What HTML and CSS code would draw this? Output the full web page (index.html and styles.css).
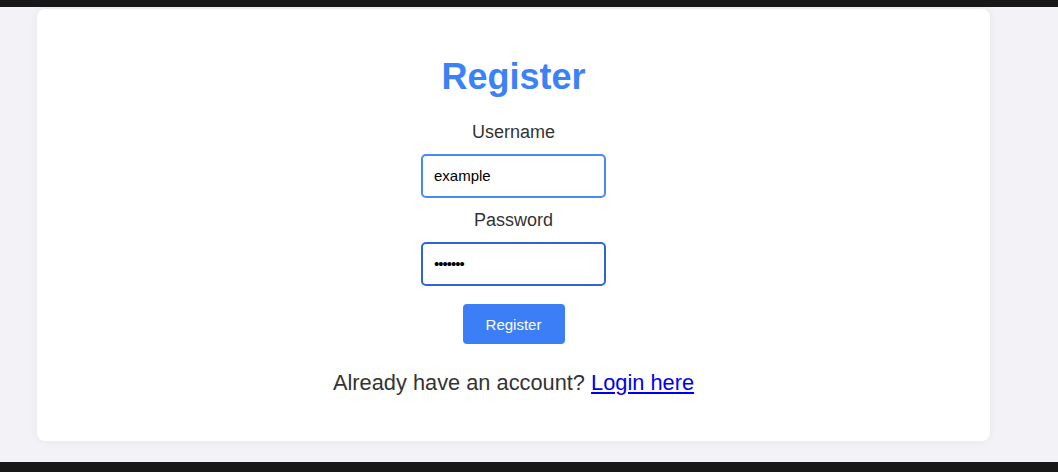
FILE: index.html
```html
<!DOCTYPE html>
<html lang="en">
<head>
  <meta charset="UTF-8" />
  <meta name="viewport" content="width=device-width, initial-scale=1.0"/>
  <title>Register</title>
  <link rel="stylesheet" href="styles.css">
</head>
<body>

  <!-- top strip -->
  <div class="topbar"></div>

  <div class="page">
    <div class="card">
      <h2>Register</h2>
      <form class="register-form" onsubmit="return false;">
        <label for="username">Username</label>
        <input type="text" id="username" value="example">
        <label for="password">Password</label>
        <input type="password" id="password" class="focused" value="1234567">
        <button type="submit">Register</button>
      </form>
      <p class="switch">Already have an account? <a href="#">Login here</a></p>
    </div>
  </div>

  <div class="bottombar"></div>

</body>
</html>
```

FILE: styles.css
```css
* {
  box-sizing: border-box;
}

body {
  margin: 0;
  background-color: #f2f2f7;
  font-family: "Liberation Sans", Arial, sans-serif;
  color: #333;
}

.topbar {
  height: 7px;
  background-color: #181818;
}

.bottombar {
  height: 10px;
  background-color: #181818;
}

.page {
  padding: 2px 68px 21px 37px;
}

.card {
  background: #fff;
  border-radius: 8px;
  box-shadow: 0 0 10px rgba(0, 0, 0, 0.06);
  padding: 47px 20px 46px;
  text-align: center;
  height: 432px;
}

.card h2 {
  margin: 0 0 24px;
  font-size: 36px;
  font-weight: 700;
  color: #3b82f6;
}

.register-form {
  display: flex;
  flex-direction: column;
  align-items: center;
}

.register-form label {
  font-size: 18px;
  margin-bottom: 11px;
}

.register-form input {
  width: 185px;
  height: 44px;
  padding: 0 11px 2px;
  margin-bottom: 12px;
  border: 2px solid #4a88f2;
  border-radius: 5px;
  font-family: "Liberation Sans", Arial, sans-serif;
  font-size: 15px;
  color: #000;
  outline: none;
}

.register-form input.focused {
  border-color: #2f66d2;
  margin-bottom: 18px;
  letter-spacing: -1px;
}

.register-form button {
  width: 102px;
  height: 40px;
  background-color: #3b7ef6;
  color: #fff;
  border: none;
  border-radius: 4px;
  font-family: "Liberation Sans", Arial, sans-serif;
  font-size: 15px;
  cursor: pointer;
}

.switch {
  margin: 26px 0 0;
  font-size: 21.8px;
}

.switch a {
  color: #0000ee;
}
```
